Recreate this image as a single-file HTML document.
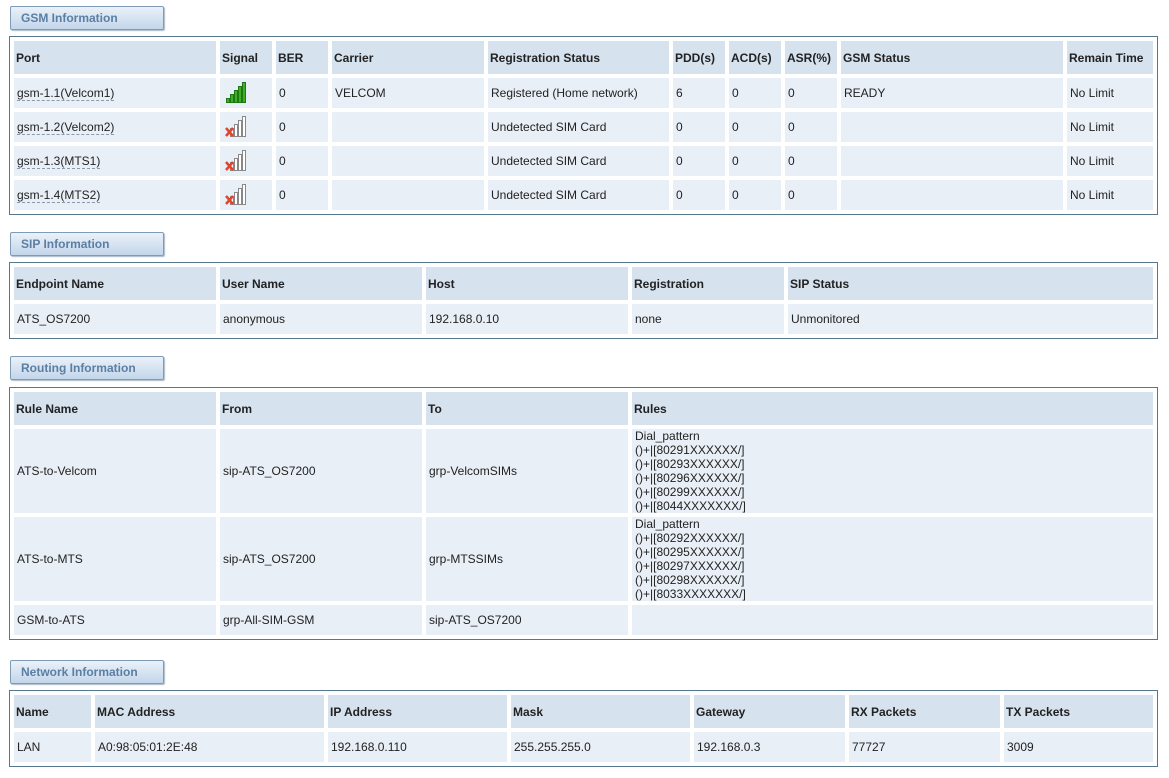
<!DOCTYPE html>
<html><head><meta charset="utf-8"><style>
body{margin:0;background:#fff;font-family:"Liberation Sans",Arial,sans-serif;font-size:12px;color:#222;width:1169px;height:778px;position:relative;overflow:hidden}
.btn{position:absolute;left:10px;border:1px solid #7f9bb6;border-radius:2px;background:linear-gradient(#eaf1f9,#c3d6ea);box-shadow:1px 1px 1px #a9b9c8;color:#5b7ea3;font-weight:bold;font-size:12px;line-height:22px;padding-left:10px;box-sizing:border-box;width:154px;height:24px}
table{position:absolute;left:9px;width:1149px;border:1px solid #56788c;border-spacing:4px 4px;padding:0;table-layout:fixed;border-collapse:separate}
td,th{padding:0 0 0 3px;text-align:left;vertical-align:middle;white-space:nowrap;overflow:hidden}
th{background:#d6e2ee;height:33px;font-weight:bold;padding-left:2px}
td{background:#e9eff6;height:30px}
a{color:#222;text-decoration:none;border-bottom:1px dashed #8a9aaa}
.r{line-height:14px;padding-top:0;padding-bottom:0}
</style></head><body>

<div class="btn" style="top:6px">GSM Information</div>
<table style="top:36px">
<colgroup><col style="width:202px"><col style="width:52px"><col style="width:52px"><col style="width:152px"><col style="width:181px"><col style="width:52px"><col style="width:52px"><col style="width:52px"><col style="width:222px"><col></colgroup>
<tr><th>Port</th><th>Signal</th><th>BER</th><th>Carrier</th><th>Registration Status</th><th>PDD(s)</th><th>ACD(s)</th><th>ASR(%)</th><th>GSM Status</th><th>Remain Time</th></tr>
<tr><td><a>gsm-1.1(Velcom1)</a></td><td><svg width="24" height="22" viewBox="0 0 24 22" style="vertical-align:middle;margin-left:2px"><g fill="#3fae2a" stroke="#1d7a12" stroke-width="1"><rect x="1.5" y="16.5" width="3" height="4"/><rect x="5.5" y="12.5" width="3" height="8"/><rect x="9.5" y="8.5" width="3" height="12"/><rect x="13.5" y="4.5" width="3" height="16"/><rect x="17.5" y="0.5" width="3" height="20"/></g></svg></td><td>0</td><td>VELCOM</td><td>Registered (Home network)</td><td>6</td><td>0</td><td>0</td><td>READY</td><td>No Limit</td></tr>
<tr><td><a>gsm-1.2(Velcom2)</a></td><td><svg width="24" height="22" viewBox="0 0 24 22" style="vertical-align:middle;margin-left:2px"><g fill="#fff" stroke="#888" stroke-width="1"><rect x="5.5" y="12.5" width="3" height="8"/><rect x="9.5" y="8.5" width="3" height="12"/><rect x="13.5" y="4.5" width="3" height="16"/><rect x="17.5" y="0.5" width="3" height="20"/></g><path d="M1 12 L8 20 M8 12 L1 20" stroke="#e0452e" stroke-width="2.5"/></svg></td><td>0</td><td></td><td>Undetected SIM Card</td><td>0</td><td>0</td><td>0</td><td></td><td>No Limit</td></tr>
<tr><td><a>gsm-1.3(MTS1)</a></td><td><svg width="24" height="22" viewBox="0 0 24 22" style="vertical-align:middle;margin-left:2px"><g fill="#fff" stroke="#888" stroke-width="1"><rect x="5.5" y="12.5" width="3" height="8"/><rect x="9.5" y="8.5" width="3" height="12"/><rect x="13.5" y="4.5" width="3" height="16"/><rect x="17.5" y="0.5" width="3" height="20"/></g><path d="M1 12 L8 20 M8 12 L1 20" stroke="#e0452e" stroke-width="2.5"/></svg></td><td>0</td><td></td><td>Undetected SIM Card</td><td>0</td><td>0</td><td>0</td><td></td><td>No Limit</td></tr>
<tr><td><a>gsm-1.4(MTS2)</a></td><td><svg width="24" height="22" viewBox="0 0 24 22" style="vertical-align:middle;margin-left:2px"><g fill="#fff" stroke="#888" stroke-width="1"><rect x="5.5" y="12.5" width="3" height="8"/><rect x="9.5" y="8.5" width="3" height="12"/><rect x="13.5" y="4.5" width="3" height="16"/><rect x="17.5" y="0.5" width="3" height="20"/></g><path d="M1 12 L8 20 M8 12 L1 20" stroke="#e0452e" stroke-width="2.5"/></svg></td><td>0</td><td></td><td>Undetected SIM Card</td><td>0</td><td>0</td><td>0</td><td></td><td>No Limit</td></tr>
</table>

<div class="btn" style="top:232px">SIP Information</div>
<table style="top:262px">
<colgroup><col style="width:202px"><col style="width:202px"><col style="width:202px"><col style="width:152px"><col></colgroup>
<tr><th>Endpoint Name</th><th>User Name</th><th>Host</th><th>Registration</th><th>SIP Status</th></tr>
<tr><td>ATS_OS7200</td><td>anonymous</td><td>192.168.0.10</td><td>none</td><td>Unmonitored</td></tr>
</table>

<div class="btn" style="top:356px">Routing Information</div>
<table style="top:387px">
<colgroup><col style="width:202px"><col style="width:202px"><col style="width:202px"><col></colgroup>
<tr><th>Rule Name</th><th>From</th><th>To</th><th>Rules</th></tr>
<tr><td>ATS-to-Velcom</td><td>sip-ATS_OS7200</td><td>grp-VelcomSIMs</td><td class="r">Dial_pattern<br>()+|[80291XXXXXX/]<br>()+|[80293XXXXXX/]<br>()+|[80296XXXXXX/]<br>()+|[80299XXXXXX/]<br>()+|[8044XXXXXXX/]</td></tr>
<tr><td>ATS-to-MTS</td><td>sip-ATS_OS7200</td><td>grp-MTSSIMs</td><td class="r">Dial_pattern<br>()+|[80292XXXXXX/]<br>()+|[80295XXXXXX/]<br>()+|[80297XXXXXX/]<br>()+|[80298XXXXXX/]<br>()+|[8033XXXXXXX/]</td></tr>
<tr><td>GSM-to-ATS</td><td>grp-All-SIM-GSM</td><td>sip-ATS_OS7200</td><td></td></tr>
</table>

<div class="btn" style="top:660px">Network Information</div>
<table style="top:690px">
<colgroup><col style="width:77px"><col style="width:229px"><col style="width:179px"><col style="width:179px"><col style="width:151px"><col style="width:151px"><col></colgroup>
<tr><th>Name</th><th>MAC Address</th><th>IP Address</th><th>Mask</th><th>Gateway</th><th>RX Packets</th><th>TX Packets</th></tr>
<tr><td>LAN</td><td>A0:98:05:01:2E:48</td><td>192.168.0.110</td><td>255.255.255.0</td><td>192.168.0.3</td><td>77727</td><td>3009</td></tr>
</table>
</body></html>
